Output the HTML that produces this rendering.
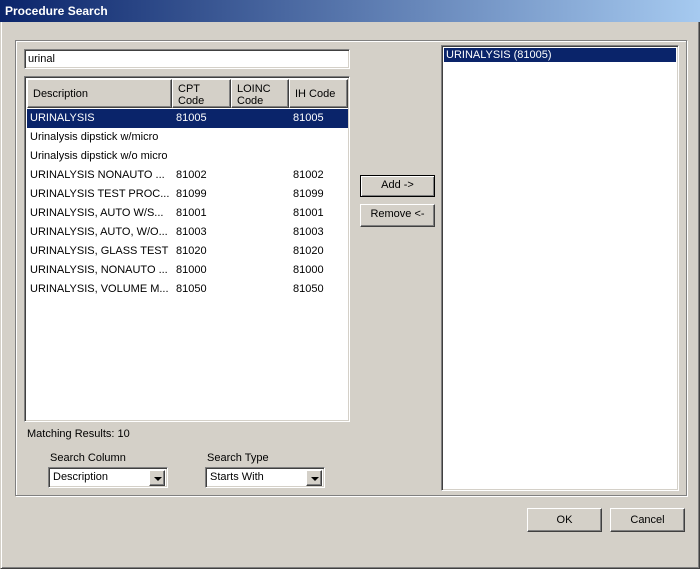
<!DOCTYPE html>
<html><head><style>
*{margin:0;padding:0;box-sizing:border-box}
body{width:700px;height:569px;background:#d4d0c8;font-family:"Liberation Sans",sans-serif;font-size:11px;color:#000;position:relative;overflow:hidden}
.a{position:absolute}
.title{left:0;top:0;width:700px;height:22px;background:linear-gradient(90deg,#0a246a,#a6caf0);color:#fff;font-weight:bold;font-size:12px;padding:4px 0 0 5px}
.win{left:0;top:0;width:700px;height:569px;border:1px solid #d4d0c8;border-right-color:#404040;border-bottom-color:#404040;box-shadow:inset 1px 1px 0 #fff,inset -1px -1px 0 #808080}
.frame{left:15px;top:40px;width:672px;height:456px;border:1px solid #808080;box-shadow:1px 1px 0 #fff,inset 1px 1px 0 #fff}
.sunk{background:#fff;border:1px solid #808080;border-right-color:#fff;border-bottom-color:#fff;box-shadow:inset 1px 1px 0 #404040,inset -1px -1px 0 #d4d0c8}
.btn{background:#d4d0c8;border:1px solid #fff;border-right-color:#404040;border-bottom-color:#404040;box-shadow:inset -1px -1px 0 #808080;text-align:center;line-height:19px}
.hd{top:2px;height:29px;background:#d4d0c8;border:1px solid #fff;border-right-color:#404040;border-bottom-color:#404040;box-shadow:inset -1px -1px 0 #808080;padding:3px 5px;line-height:12px;font-size:11px}
.row{left:2px;width:321px;height:19px;line-height:19px;white-space:nowrap}
.row span{position:absolute;overflow:hidden}
.sel{background:#0a246a;color:#fff}
.c1{left:3px;width:140px}.c2{left:149px}.c4{left:266px}
.arrow{width:16px;height:16px;top:2px;right:2px}
.arrow:after{content:"";position:absolute;left:4px;top:6px;border:4px solid transparent;border-top:4px solid #000;border-bottom:0}
</style></head><body>
<div class="a win"></div>
<div class="a title">Procedure Search</div>
<div class="a frame"></div>
<div class="a sunk" style="left:24px;top:49px;width:326px;height:20px;padding:3px 3px;line-height:12px">urinal</div>
<div class="a sunk" style="left:24px;top:76px;width:326px;height:346px">
 <div class="a hd" style="left:2px;width:145px;line-height:22px">Description</div>
 <div class="a hd" style="left:147px;width:59px">CPT<br>Code</div>
 <div class="a hd" style="left:206px;width:58px">LOINC<br>Code</div>
 <div class="a hd" style="left:264px;width:59px;line-height:22px">IH Code</div>
 <div class="a row sel" style="top:32px"><span class="c1">URINALYSIS</span><span class="c2">81005</span><span class="c4">81005</span></div>
 <div class="a row" style="top:51px"><span class="c1" style="width:200px">Urinalysis dipstick w/micro</span></div>
 <div class="a row" style="top:70px"><span class="c1" style="width:200px">Urinalysis dipstick w/o micro</span></div>
 <div class="a row" style="top:89px"><span class="c1">URINALYSIS NONAUTO ...</span><span class="c2">81002</span><span class="c4">81002</span></div>
 <div class="a row" style="top:108px"><span class="c1">URINALYSIS TEST PROC...</span><span class="c2">81099</span><span class="c4">81099</span></div>
 <div class="a row" style="top:127px"><span class="c1">URINALYSIS, AUTO W/S...</span><span class="c2">81001</span><span class="c4">81001</span></div>
 <div class="a row" style="top:146px"><span class="c1">URINALYSIS, AUTO, W/O...</span><span class="c2">81003</span><span class="c4">81003</span></div>
 <div class="a row" style="top:165px"><span class="c1">URINALYSIS, GLASS TEST</span><span class="c2">81020</span><span class="c4">81020</span></div>
 <div class="a row" style="top:184px"><span class="c1">URINALYSIS, NONAUTO ...</span><span class="c2">81000</span><span class="c4">81000</span></div>
 <div class="a row" style="top:203px"><span class="c1">URINALYSIS, VOLUME M...</span><span class="c2">81050</span><span class="c4">81050</span></div>
</div>
<div class="a" style="left:27px;top:428px">Matching Results: 10</div>
<div class="a" style="left:50px;top:452px">Search Column</div>
<div class="a" style="left:207px;top:452px">Search Type</div>
<div class="a sunk" style="left:48px;top:467px;width:120px;height:21px;padding:3px 4px;line-height:13px">Description<div class="a btn arrow"></div></div>
<div class="a sunk" style="left:205px;top:467px;width:120px;height:21px;padding:3px 4px;line-height:13px">Starts With<div class="a btn arrow"></div></div>
<div class="a btn" style="left:360px;top:175px;width:75px;height:22px;border-color:#000;box-shadow:inset 1px 1px 0 #fff,inset -1px -1px 0 #808080">Add -&gt;</div>
<div class="a btn" style="left:360px;top:204px;width:75px;height:23px">Remove &lt;-</div>
<div class="a sunk" style="left:441px;top:45px;width:238px;height:446px">
 <div class="a sel" style="left:2px;top:2px;width:232px;height:14px;line-height:14px;padding-left:2px">URINALYSIS (81005)</div>
</div>
<div class="a btn" style="left:527px;top:508px;width:75px;height:24px;line-height:22px">OK</div>
<div class="a btn" style="left:610px;top:508px;width:75px;height:24px;line-height:22px">Cancel</div>
</body></html>
